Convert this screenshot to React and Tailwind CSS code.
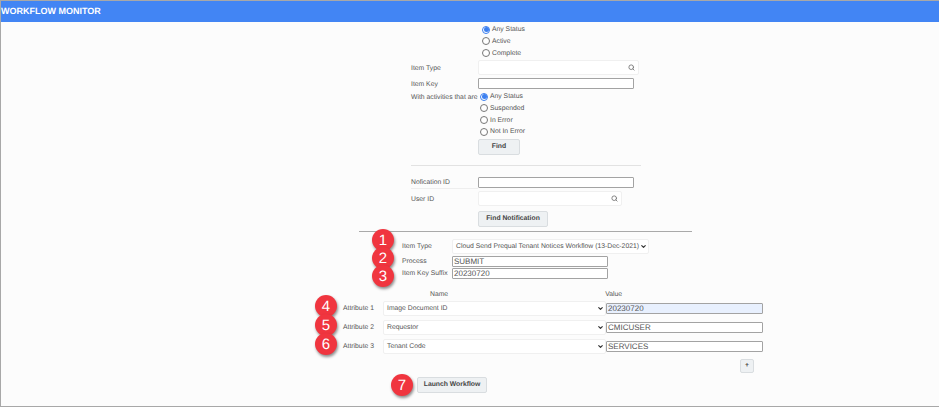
import React from 'react';
import { Search, ChevronDown } from 'lucide-react';

function Radio({ label, checked }) {
  return (
    <div className="flex items-center h-[11.67px]">
      {checked ? (
        <span className="w-[8px] h-[8px] rounded-full border border-[#3b7ff0] flex items-center justify-center bg-white">
          <span className="w-[5px] h-[5px] rounded-full bg-[#3b7ff0]" />
        </span>
      ) : (
        <span className="w-[8px] h-[8px] rounded-full border border-[#777] bg-white" />
      )}
      <span className="ml-[2px] pt-[2px]">{label}</span>
    </div>
  );
}

function LookupField({ width }) {
  return (
    <div className={width + ' h-[15px] bg-white rounded-[2px] border border-[#f0f0f0] flex items-center justify-end pr-[3px]'}>
      <Search size={7} strokeWidth={3} className="text-[#777]" />
    </div>
  );
}

function TextInput({ width, value, focused }) {
  return (
    <div className={width + ' h-[11px] rounded-[1px] border border-[#a3a3a3] flex items-center px-[1px] text-[8px] leading-none ' + (focused ? 'bg-[#e8f0fe]' : 'bg-white')}>
      {value}
    </div>
  );
}

function SelectBox({ width, value }) {
  return (
    <div className={width + ' h-[15px] bg-white rounded-[2px] border border-[#f0f0f0] flex items-center justify-between pl-[3px] pr-[1px] whitespace-nowrap'}>
      <span className="pt-[1px]">{value}</span>
      <ChevronDown size={7} strokeWidth={4} className="text-[#333]" />
    </div>
  );
}

function Badge({ n, className }) {
  return (
    <div className={'absolute w-[22px] h-[22px] rounded-full bg-[#f0353f] text-white text-[15px] leading-none flex items-center justify-center shadow-[1px_2px_3px_rgba(0,0,0,0.45)] ' + className}>
      {n}
    </div>
  );
}

function Btn({ children, className }) {
  return (
    <div className={'rounded-[2px] border border-[#d9dde0] bg-[#eef1f3] flex items-center justify-center pt-[1px] font-bold text-[#444] ' + className}>
      {children}
    </div>
  );
}

const attributes = [
  { label: 'Attribute 1', name: 'Image Document ID', value: '20230720', focused: true, n: 4 },
  { label: 'Attribute 2', name: 'Requestor', value: 'CMICUSER', n: 5 },
  { label: 'Attribute 3', name: 'Tenant Code', value: 'SERVICES', n: 6 },
];

export default function App() {
  return (
    <div className="w-[939px] h-[407px] overflow-hidden bg-[#fcfcfc] text-[#555] text-[6.8px] leading-none border-l border-b border-t border-[#a8a8a8] font-['Liberation_Sans',Arial,sans-serif] [text-rendering:geometricPrecision]">
      <header className="h-[21px] bg-[#4285f4] flex items-center">
        <span className="text-white font-bold text-[9px]">WORKFLOW MONITOR</span>
      </header>

      {/* search form */}
      <section className="ml-[410px] w-[230px] pt-[1px]">
        <div className="pl-[71px] pt-[1px]">
          <Radio label="Any Status" checked />
          <Radio label="Active" />
          <Radio label="Complete" />
        </div>
        <div className="flex items-center mt-[1px]">
          <span className="w-[67px] pt-[3px]">Item Type</span>
          <LookupField width="w-[161px]" />
        </div>
        <div className="flex items-center mt-[3px]">
          <span className="w-[67px] pt-[3px]">Item Key</span>
          <TextInput width="w-[156px]" />
        </div>
        <div className="flex mt-[2px]">
          <span className="w-[69px] pt-[4px] whitespace-nowrap">With activities that are</span>
          <div>
            <Radio label="Any Status" checked />
            <Radio label="Suspended" />
            <Radio label="In Error" />
            <Radio label="Not In Error" />
          </div>
        </div>
        <Btn className="ml-[67px] mt-[1px] w-[42px] h-[16px]">Find</Btn>
        <div className="mt-[10px] border-t border-[#e2e2e2]" />

        <div className="flex items-center mt-[11px]">
          <span className="w-[67px] border-b border-[#eee] pb-[2px] pt-[3px]">Nofication ID</span>
          <TextInput width="w-[156px]" />
        </div>
        <div className="flex items-center mt-[2px]">
          <span className="w-[67px] pt-[3px]">User ID</span>
          <LookupField width="w-[144px]" />
        </div>
        <Btn className="ml-[67px] mt-[5px] w-[70px] h-[16px]">Find Notification</Btn>
      </section>

      <div className="ml-[358px] w-[333px] mt-[4px] border-t border-[#a9a9a9]" />

      {/* launch form */}
      <section className="relative ml-[401px] w-[250px] mt-[7px]">
        <Badge n={1} className="left-[-30px] top-[-10px]" />
        <Badge n={2} className="left-[-30px] top-[8px]" />
        <Badge n={3} className="left-[-30px] top-[26px]" />
        <div className="flex items-center">
          <span className="w-[50px] pt-[1px]">Item Type</span>
          <SelectBox width="w-[197px]" value="Cloud Send Prequal Tenant Notices Workflow (13-Dec-2021)" />
        </div>
        <div className="flex items-center mt-[2px]">
          <span className="w-[50px] pt-[2px]">Process</span>
          <TextInput width="w-[156px]" value="SUBMIT" />
        </div>
        <div className="flex items-center mt-[1px]">
          <span className="w-[50px] pt-[1px] whitespace-nowrap">Item Key Suffix</span>
          <TextInput width="w-[156px]" value="20230720" />
        </div>
      </section>

      <section className="relative ml-[342px] w-[421px] mt-[13px]">
        <div className="flex h-[5px] items-start">
          <span className="ml-[87px]">Name</span>
          <span className="ml-[157px]">Value</span>
        </div>
        {attributes.map(attr => (
          <div key={attr.n} className="relative flex items-center h-[15px] mt-[4px]">
            <Badge n={attr.n} className="left-[-28px] top-[-6px]" />
            <span className="w-[40px] pt-[1px]">{attr.label}</span>
            <SelectBox width="w-[223px]" value={attr.name} />
            <TextInput width="w-[157px]" value={attr.value} focused={attr.focused} />
          </div>
        ))}
        <Btn className="ml-[397px] mt-[5px] w-[14px] h-[14px]">+</Btn>
        <div className="relative ml-[74px] mt-[4px] w-[70px]">
          <Badge n={7} className="left-[-26px] top-[-3px]" />
          <Btn className="w-[70px] h-[16px]">Launch Workflow</Btn>
        </div>
      </section>
    </div>
  );
}
